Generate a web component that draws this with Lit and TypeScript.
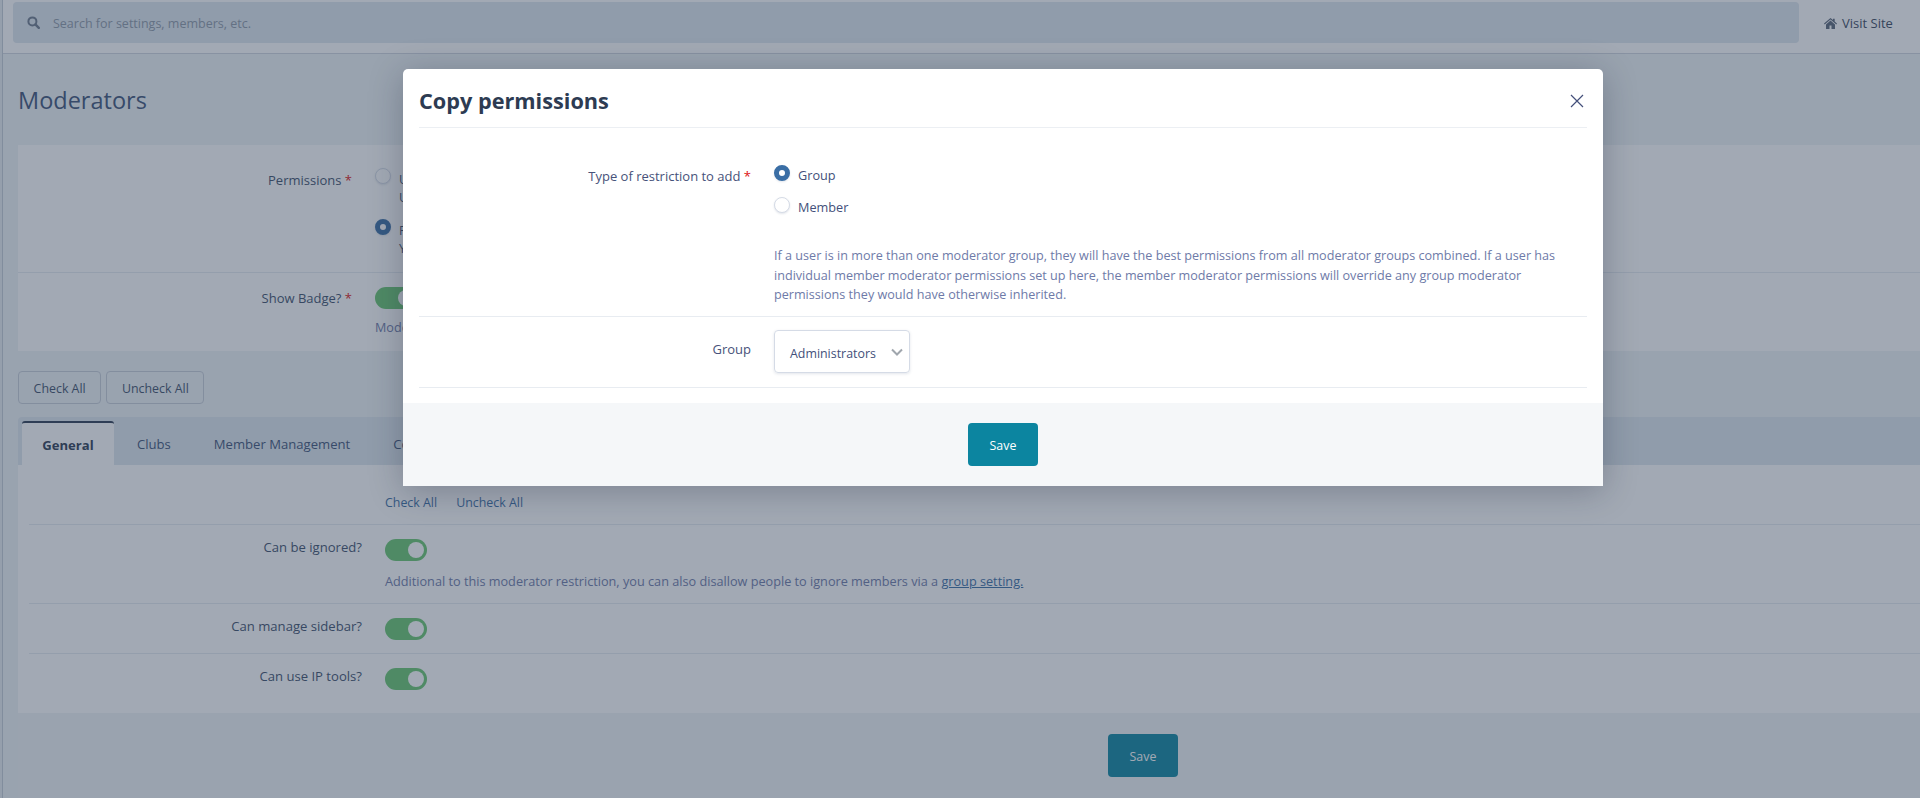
import { LitElement, html, css } from "lit";
import { customElement } from "lit/decorators.js";

const FONT = css`"Open Sans", "Noto Sans", sans-serif`;

@customElement("app-root")
export class AppRoot extends LitElement {
  static styles = css`
    :host { display: block; height: 798px; overflow: hidden; position: relative; font-family: ${FONT}; font-size: 12.4px; color: #3d4f6b; background: #eff4f6; }
    * { box-sizing: border-box; }
    .page { display: flex; height: 798px; width: 1920px; overflow: hidden; }
    .rail { width: 3px; flex: none; background: #e8edf1; border-right: 1px solid #c4ccd6; }
    .main { width: 1917px; flex: none; }
    .top { height: 54px; background: #fff; border-bottom: 1px solid #cfd6de; display: flex; align-items: flex-start; padding: 2px 0 0 10px; }
    .search { width: 1786px; height: 41px; background: #dfe7ee; border-radius: 4px; display: flex; align-items: center; padding-left: 14px; gap: 13px; color: #8d99a8; font-size: 12.5px; }
    .search span { margin-top: 2px; }
    .visit { display: flex; align-items: center; gap: 5px; margin: 12px 0 0 25px; color: #39475c; font-weight: 500; font-size: 13px; }
    h1 { margin: 0; font-size: 23.5px; line-height: 32px; font-weight: 400; color: #3d5378; padding: 30px 0 0 15px; height: 91px; }
    .wrap { padding-left: 15px; width: 2265px; }
    .panel { background: #fff; }
    .row { display: grid; grid-template-columns: 334px 1fr; column-gap: 23px; }
    .row + .row { border-top: 1px solid #e5ebf0; }
    .lab { text-align: right; color: #3d4f6b; font-size: 13px; }
    .req { color: #d11; }
    .r1 { height: 127px; padding: 26px 0 0 0; }
    .r2 { height: 79px; padding: 14px 0 0 0; }
    .r2 .lab { padding-top: 2px; }
    .opt { display: flex; gap: 8px; height: 51px; line-height: 18px; }
    .opt .radio { margin-top: -3px; }
    .toggle { width: 42px; height: 22px; border-radius: 11px; background: #68c670; position: relative; display: block; }
    .toggle::after { content: ""; position: absolute; right: 3px; top: 3px; width: 16px; height: 16px; border-radius: 50%; background: #fff; }
    .radio { width: 16px; height: 16px; border-radius: 50%; flex: none; background: #fff; border: 1px solid #d5dbe6; box-shadow: 0 1px 2px rgba(60,80,120,.15); }
    .radio.on { border: 5px solid #3a6ea5; }
    .help { color: #6e7aa8; font-size: 12.62px; line-height: 19.5px; }
    .btns { display: flex; gap: 5px; padding: 20px 0 13px; }
    .btn { height: 33px; padding: 0 14.6px; border: 1px solid #c6ced8; border-radius: 4px; display: flex; align-items: center; color: #3d4f6b; }
    .btn span { margin-top: 2px; }
    .tabs { height: 48px; background: #dfe7ee; display: flex; padding: 4px 0 0 4px; border-radius: 4px 4px 0 0; }
    .tab { height: 44px; padding: 2px 21.5px 0; display: flex; align-items: center; color: #3d5378; font-size: 13.1px; }
    .tab.on { background: #fff; border-top: 2px solid #2d3b52; font-weight: 700; color: #2d3b52; border-radius: 3px 3px 0 0; width: 92px; padding: 2px 0 0; justify-content: center; margin-right: 1.5px; }
    .body { height: 248px; background: #fff; padding: 0 0 0 11px; }
    .ck { height: 60px; display: flex; gap: 19px; padding: 29px 0 0 356px; color: #3a6ea5; border-bottom: 1px solid #e5ebf0; }
    .s { display: grid; grid-template-columns: 333px 1fr; column-gap: 23px; border-bottom: 1px solid #e5ebf0; padding-top: 14px; }
    .s.last { border: 0; }
    .s .lab { margin-top: -1px; font-size: 13.1px; }
    .s .help { margin-top: 11px; color: #6e7aa8; font-size: 12.7px; }
    .s a { color: #3a6ea5; font-weight: 500; }
    .foot { height: 85px; background: #f1f5f6; display: flex; justify-content: center; padding-top: 21px; }
    .save { height: 43px; width: 70px; border-radius: 4px; background: #0c85a0; color: #fff; display: flex; align-items: center; justify-content: center; font-size: 12.4px; padding-top: 1px; }
    .overlay { position: absolute; inset: 0; background: rgba(48, 64, 88, .45); }
    .modal { position: absolute; left: 403px; top: 69px; width: 1200px; height: 417px; background: #fff; border-radius: 5px 5px 0 0; box-shadow: 0 5px 34px rgba(20, 30, 50, .28); display: flex; flex-direction: column; overflow: hidden; }
    .mhead { height: 59px; margin: 0 16px; border-bottom: 1px solid #eceff3; display: flex; align-items: center; justify-content: space-between; padding-top: 4px; }
    .mhead h2 { margin: 0; font-size: 21.7px; font-weight: 700; color: #2d3b52; }
    .mhead svg { margin: 2px 3px 0 0; }
    .mbody { flex: 1; padding: 0 16px; }
    .mrow { display: grid; grid-template-columns: 332px 1fr; column-gap: 23px; border-bottom: 1px solid #e8ecf1; }
    .mrow .lab { color: #47527a; }
    .m1 { height: 189px; padding-top: 37px; }
    .m2 { height: 71px; padding-top: 13px; }
    .mopts { display: flex; flex-direction: column; gap: 16px; }
    .mopt { display: flex; gap: 8px; align-items: center; height: 16px; color: #434f7a; font-size: 12.7px; }
    .mopt span + span { margin-top: 3px; }
    .mhelp { margin-top: 33px; width: 795px; }
    .m1 .lab { padding-top: 2px; }
    .sel { height: 43px; width: 136px; border: 1px solid #d5dbe6; border-radius: 4px; box-shadow: 0 1px 3px rgba(60,80,120,.15); display: flex; align-items: center; justify-content: space-between; padding: 4px 6px 0 15px; color: #434f7a; }
    .sel svg { margin-top: -4px; }
    .mfoot { height: 83px; background: #f5f7f9; display: flex; justify-content: center; padding-top: 20px; }
    .m2 .lab { padding-top: 10px; }
  `;

  render() {
    return html`
      <div class="page">
        <div class="rail"></div>
        <div class="main">
          <div class="top">
            <div class="search">
              <svg width="13" height="13" viewBox="0 0 13 13"><circle cx="5.4" cy="5.4" r="4" fill="none" stroke="#6e7b8d" stroke-width="2"/><path d="M8.4 8.4l3.4 3.4" stroke="#6e7b8d" stroke-width="2.4" stroke-linecap="round"/></svg>
              <span>Search for settings, members, etc.</span>
            </div>
            <div class="visit">
              <svg width="13" height="11" viewBox="0 0 13 11"><path d="M6.5 0L0 5.6l.7.8L6.5 1.5l5.8 4.9.7-.8-2.3-2V.8H9v1.3zM2 6.4V11h3.5V7.6h2V11H11V6.4L6.5 2.6z" fill="#5a6678"/></svg>
              <span>Visit Site</span>
            </div>
          </div>
          <h1>Moderators</h1>
          <div class="wrap">
            <div class="panel">
              <div class="row r1">
                <div class="lab">Permissions <span class="req">*</span></div>
                <div>
                  <div class="opt"><span class="radio"></span><span>Use group permissions<br />Use the permissions of the group</span></div>
                  <div class="opt"><span class="radio on"></span><span>Restricted<br />You can set permissions below</span></div>
                </div>
              </div>
              <div class="row r2">
                <div class="lab">Show Badge? <span class="req">*</span></div>
                <div><span class="toggle"></span><div class="help" style="margin-top:9px">Moderator badge</div></div>
              </div>
            </div>
            <div class="btns"><div class="btn"><span>Check All</span></div><div class="btn"><span>Uncheck All</span></div></div>
            <div class="tabs">
              <div class="tab on">General</div><div class="tab">Clubs</div><div class="tab">Member Management</div><div class="tab">Content</div>
            </div>
            <div class="body">
              <div class="ck"><span>Check All</span><span>Uncheck All</span></div>
              <div class="s" style="height:79px"><div class="lab">Can be ignored?</div><div><span class="toggle"></span><div class="help">Additional to this moderator restriction, you can also disallow people to ignore members via a <a href="#">group setting.</a></div></div></div>
              <div class="s" style="height:50px"><div class="lab">Can manage sidebar?</div><div><span class="toggle"></span></div></div>
              <div class="s last"><div class="lab">Can use IP tools?</div><div><span class="toggle"></span></div></div>
            </div>
            <div class="foot"><div class="save">Save</div></div>
          </div>
        </div>
      </div>
      <div class="overlay"></div>
      <div class="modal">
        <div class="mhead">
          <h2>Copy permissions</h2>
          <svg width="14" height="14" viewBox="0 0 14 14"><path d="M1 1l12 12M13 1L1 13" stroke="#434f7a" stroke-width="1.2"/></svg>
        </div>
        <div class="mbody">
          <div class="mrow m1">
            <div class="lab">Type of restriction to add <span class="req">*</span></div>
            <div>
              <div class="mopts">
                <div class="mopt"><span class="radio on"></span><span>Group</span></div>
                <div class="mopt"><span class="radio"></span><span>Member</span></div>
              </div>
              <div class="help mhelp">If a user is in more than one moderator group, they will have the best permissions from all moderator groups combined. If a user has individual member moderator permissions set up here, the member moderator permissions will override any group moderator permissions they would have otherwise inherited.</div>
            </div>
          </div>
          <div class="mrow m2">
            <div class="lab">Group</div>
            <div class="sel"><span>Administrators</span><svg width="12" height="8" viewBox="0 0 12 8"><path d="M1 1.5l5 5 5-5" fill="none" stroke="#a0a6ad" stroke-width="2"/></svg></div>
          </div>
        </div>
        <div class="mfoot"><div class="save">Save</div></div>
      </div>
    `;
  }
}
